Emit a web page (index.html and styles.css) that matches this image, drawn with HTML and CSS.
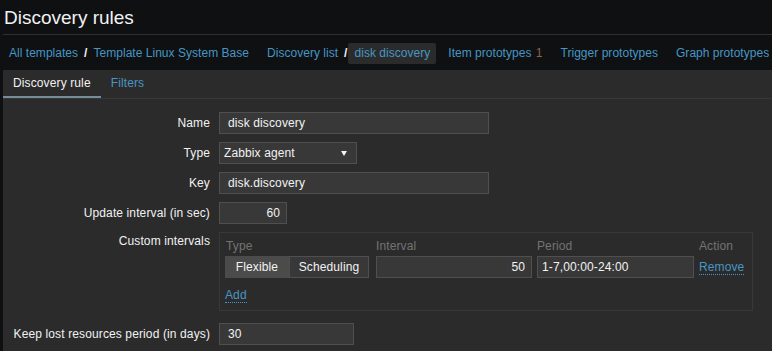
FILE: index.html
```html
<!DOCTYPE html>
<html lang="en">
<head>
    <meta charset="UTF-8">
    <title>Discovery rules</title>
    <link rel="stylesheet" href="styles.css">
</head>
<body>
    <div class="header">
        <h1>Discovery rules</h1>
    </div>

    <nav class="crumbs">
        <ul class="crumb-group">
            <li><a href="#">All templates</a></li>
            <li class="sep">/</li>
            <li><a href="#">Template Linux System Base</a></li>
        </ul>
        <ul class="crumb-group">
            <li><a href="#">Discovery list</a></li>
            <li class="sep">/</li>
            <li class="current"><a href="#">disk discovery</a></li>
        </ul>
        <ul class="crumb-group">
            <li><a href="#">Item prototypes</a> <span class="count">1</span></li>
        </ul>
        <ul class="crumb-group">
            <li><a href="#">Trigger prototypes</a></li>
        </ul>
        <ul class="crumb-group">
            <li><a href="#">Graph prototypes</a></li>
        </ul>
    </nav>

    <div class="panel">
        <ul class="tabs">
            <li class="active">Discovery rule</li>
            <li><a href="#">Filters</a></li>
        </ul>

        <div class="form">
            <div class="label">Name</div>
            <div class="field"><div class="input name">disk discovery</div></div>

            <div class="label">Type</div>
            <div class="field">
                <div class="input select">
                    <span>Zabbix agent</span>
                    <span class="arrow"></span>
                </div>
            </div>

            <div class="label">Key</div>
            <div class="field"><div class="input name">disk.discovery</div></div>

            <div class="label">Update interval (in sec)</div>
            <div class="field"><div class="input short num">60</div></div>

            <div class="label top">Custom intervals</div>
            <div class="field">
                <div class="intervals">
                    <div class="int-row int-head">
                        <div>Type</div>
                        <div>Interval</div>
                        <div>Period</div>
                        <div>Action</div>
                    </div>
                    <div class="int-row">
                        <div class="segmented">
                            <span class="seg on">Flexible</span>
                            <span class="seg">Scheduling</span>
                        </div>
                        <div class="input interval num">50</div>
                        <div class="input period">1-7,00:00-24:00</div>
                        <div><a href="#" class="dotted">Remove</a></div>
                    </div>
                    <div class="int-add"><a href="#" class="dotted">Add</a></div>
                </div>
            </div>

            <div class="label last">Keep lost resources period (in days)</div>
            <div class="field last"><div class="input keep">30</div></div>
        </div>
    </div>
</body>
</html>
```

FILE: styles.css
```css
body {
    margin: 0;
    background: #0e1012;
    color: #f2f2f2;
    font-family: "Liberation Sans", Arial, sans-serif;
    font-size: 12px;
    letter-spacing: 0.12px;
    height: 351px;
    overflow: hidden;
}

a {
    color: #4796c4;
    text-decoration: none;
}

ul {
    list-style: none;
    margin: 0;
    padding: 0;
}

.header {
    margin-left: 3px;
    height: 34px;
    border-bottom: 1px solid #303030;
}

h1 {
    margin: 0;
    padding: 6px 0 0 1px;
    font-size: 19px;
    font-weight: normal;
    letter-spacing: 0;
    line-height: 24px;
}

.crumbs {
    display: flex;
    gap: 6px;
    height: 34px;
    align-items: center;
    padding: 1px 0 0 3px;
    white-space: nowrap;
    overflow: hidden;
    letter-spacing: 0.03px;
}

.crumb-group {
    display: flex;
    align-items: center;
    flex-shrink: 0;
}

.crumb-group li {
    padding: 0 6px;
    line-height: 21px;
}

.crumb-group .sep {
    padding: 0;
    font-weight: bold;
    color: #f2f2f2;
}

.crumb-group .current {
    background: #2b2b2b;
    border-radius: 2px;
    margin-left: 1px;
}

.count {
    color: #8c6446;
    padding-left: 1px;
}

.panel {
    margin-left: 3px;
    background: #2b2b2b;
    height: 281px;
}

.tabs {
    display: flex;
    height: 28px;
    border-bottom: 1px solid #383838;
}

.tabs li {
    padding: 0 10px;
    line-height: 27px;
}

.tabs .active {
    border-bottom: 2px solid #768d99;
    line-height: 26px;
}

.form {
    display: grid;
    grid-template-columns: 207px 1fr;
    column-gap: 9px;
    row-gap: 8px;
    padding-top: 13px;
}

.label {
    text-align: right;
    line-height: 22px;
}

.label.top {
    line-height: 18px;
}

.label.last,
.field.last {
    margin-top: 4px;
}

.field {
    display: flex;
}

.input {
    box-sizing: border-box;
    height: 22px;
    line-height: 20px;
    padding: 0 4px 0 8px;
    background: #383838;
    border: 1px solid #4f4f4f;
    color: #f2f2f2;
    white-space: nowrap;
}

.input.num {
    text-align: right;
    padding-right: 6px;
}

.name { width: 270px; }
.short { width: 68px; }
.keep { width: 135px; }
.interval { width: 156px; }
.period { width: 157px; padding-left: 4px; }

.select {
    width: 138px;
    padding-left: 4px;
    display: flex;
    justify-content: space-between;
    align-items: center;
}

.select .arrow {
    width: 0;
    height: 0;
    margin-right: 5px;
    border-left: 3px solid transparent;
    border-right: 3px solid transparent;
    border-top: 5px solid #f2f2f2;
}

.intervals {
    box-sizing: border-box;
    width: 534px;
    border: 1px solid #383838;
    padding: 5px 8px 5px 5px;
}

.int-row {
    display: grid;
    grid-template-columns: 151px 161px 162px auto;
    align-items: center;
}

.int-head {
    color: #737373;
    line-height: 16px;
    padding-bottom: 2px;
}

.int-head div:first-child {
    padding-left: 1px;
}

.segmented {
    display: flex;
    width: 144px;
}

.seg {
    box-sizing: border-box;
    height: 22px;
    line-height: 20px;
    border: 1px solid #4f4f4f;
    background: #383838;
    text-align: center;
    width: 80px;
}

.seg.on {
    width: 64px;
    background: #4b4b4b;
    border-color: #4b4b4b;
}

.dotted {
    border-bottom: 1px dotted #4796c4;
}

.int-add {
    margin-top: 8px;
    line-height: 19px;
}
```
